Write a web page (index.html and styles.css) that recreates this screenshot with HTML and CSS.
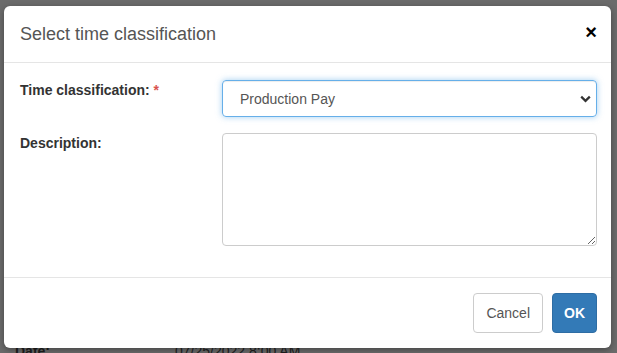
FILE: index.html
```html
<!DOCTYPE html>
<html lang="en">
<head>
    <meta charset="UTF-8">
    <meta name="viewport" content="width=device-width, initial-scale=1.0">
    <title>Select time classification</title>
    <link rel="stylesheet" href="styles.css">
</head>
<body>
    <div class="page">
        <div class="page-row">
            <span class="page-label">Date:</span>
            <span class="page-value">07/25/2022 8:00 AM</span>
        </div>
    </div>

    <div class="modal">
        <div class="modal-header">
            <h4 class="modal-title">Select time classification</h4>
            <button class="close" type="button">&times;</button>
        </div>

        <div class="modal-body">
            <div class="form-row">
                <label class="form-label" for="timeClass">Time classification: <span class="required">*</span></label>
                <div class="select" id="timeClass">
                    <span>Production Pay</span>
                    <svg class="chevron" width="11" height="8" viewBox="0 0 11 8">
                        <path d="M1.2 1.6 L5.5 5.9 L9.8 1.6" fill="none" stroke="#333" stroke-width="2.2"/>
                    </svg>
                </div>
            </div>
            <div class="form-row">
                <label class="form-label" for="description">Description:</label>
                <textarea class="textarea" id="description"></textarea>
            </div>
        </div>

        <div class="modal-footer">
            <button class="btn" type="button">Cancel</button>
            <button class="btn btn-primary" type="button">OK</button>
        </div>
    </div>
</body>
</html>
```

FILE: styles.css
```css
html, body {
    height: 100%;
}
body {
    margin: 0;
    background-color: #6b6b6b;
    font-family: "Liberation Sans", Arial, sans-serif;
    overflow: hidden;
}
.page {
    padding: 343px 0 0 15px;
}
.page-row {
    display: flex;
    font-size: 14px;
    color: #1e1e1e;
}
.page-label {
    width: 160px;
    font-weight: bold;
}
.modal {
    position: absolute;
    top: 6px;
    left: 4px;
    width: 607px;
    height: 342px;
    display: flex;
    flex-direction: column;
    background-color: #fff;
    border-radius: 6px;
    box-shadow: 0 2px 6px rgba(0, 0, 0, 0.35);
}
.modal-header {
    height: 56px;
    display: flex;
    align-items: center;
    justify-content: space-between;
    padding: 0 14px 0 16px;
    border-bottom: 1px solid #e5e5e5;
}
.modal-title {
    margin: 0;
    font-size: 18px;
    font-weight: normal;
    color: #555;
}
.close {
    border: none;
    background: none;
    padding: 0;
    margin-top: -4px;
    font-family: "Liberation Sans", Arial, sans-serif;
    font-size: 20px;
    font-weight: bold;
    line-height: 1;
    color: #000;
    cursor: pointer;
}
.modal-body {
    flex: 1;
    display: flex;
    flex-direction: column;
    gap: 16px;
    padding: 17px 14px 0 16px;
}
.form-row {
    display: flex;
}
.form-label {
    width: 202px;
    padding-top: 2px;
    font-size: 14px;
    font-weight: bold;
    color: #333;
}
.required {
    color: #d9534f;
}
.select {
    flex: 1;
    height: 37px;
    box-sizing: border-box;
    display: flex;
    align-items: center;
    justify-content: space-between;
    padding: 0 5px 0 17px;
    border: 1px solid #66afe9;
    border-radius: 4px;
    box-shadow: inset 0 1px 1px rgba(0, 0, 0, 0.075), 0 0 6px rgba(102, 175, 233, 0.6);
    font-size: 14px;
    color: #555;
}
.textarea {
    flex: 1;
    height: 113px;
    box-sizing: border-box;
    margin: 0;
    border: 1px solid #ccc;
    border-radius: 4px;
    resize: vertical;
    font-family: "Liberation Sans", Arial, sans-serif;
}
.modal-footer {
    display: flex;
    justify-content: flex-end;
    gap: 9px;
    padding: 15px 14px 15px 16px;
    border-top: 1px solid #e5e5e5;
}
.btn {
    height: 40px;
    padding: 0 12px;
    border: 1px solid #ccc;
    border-radius: 4px;
    background-color: #fff;
    font-family: "Liberation Sans", Arial, sans-serif;
    font-size: 14px;
    color: #555;
    cursor: pointer;
}
.btn-primary {
    padding: 0 11px;
    border-color: #2e6da4;
    background-color: #337ab7;
    color: #fff;
    font-weight: bold;
}
```
